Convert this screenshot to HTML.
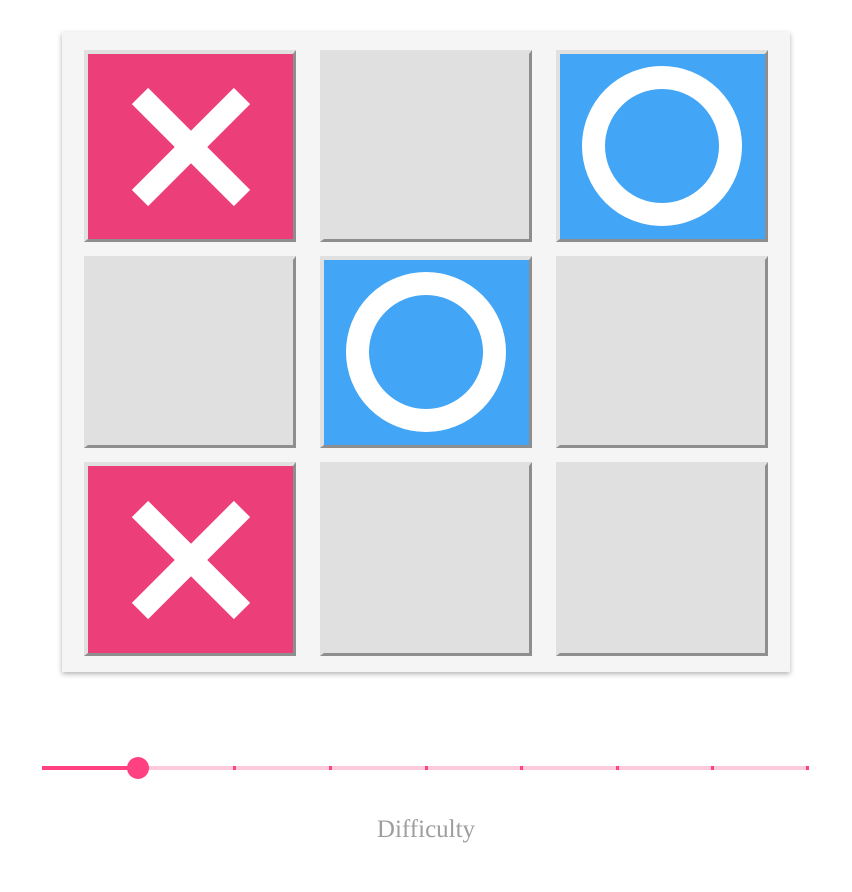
<!DOCTYPE html>
<html><head><style>
body{margin:0;width:852px;height:892px;background:#fff;position:relative;font-family:"Liberation Serif",serif;overflow:hidden}
.board{position:absolute;left:62px;top:32px;width:728px;height:640px;background:#f5f5f5;box-shadow:0 2px 5px rgba(0,0,0,.3)}
.c{position:absolute;box-sizing:border-box;width:212px;border-style:solid;border-width:4px 3px 3px 4px;border-color:#e0e0e0 #8e8e8e #8e8e8e #e0e0e0;background:#e0e0e0}
.x{background:#ec3e78}.o{background:#42a5f5}
.c svg{position:absolute;left:50%;top:50%;transform:translate(-50%,-50%)}
</style></head><body>
<div class="board"></div>
<div class="c x" style="left:84px;top:50px;height:192px"><svg width="160" height="160" viewBox="-80 -80 160 160"><path d="M-51-51L51 51M51-51L-51 51" stroke="#fff" stroke-width="23"/></svg></div>
<div class="c" style="left:320px;top:50px;height:192px"></div>
<div class="c o" style="left:556px;top:50px;height:192px"><svg width="170" height="170" viewBox="-85 -85 170 170" style="margin-left:-1px;margin-top:-1px"><circle r="68.5" fill="none" stroke="#fff" stroke-width="23"/></svg></div>
<div class="c" style="left:84px;top:256px;height:192px"></div>
<div class="c o" style="left:320px;top:256px;height:192px"><svg width="170" height="170" viewBox="-85 -85 170 170" style="margin-left:-1px;margin-top:-1px"><circle r="68.5" fill="none" stroke="#fff" stroke-width="23"/></svg></div>
<div class="c" style="left:556px;top:256px;height:192px"></div>
<div class="c x" style="left:84px;top:462px;height:194px"><svg width="160" height="160" viewBox="-80 -80 160 160"><path d="M-51-51L51 51M51-51L-51 51" stroke="#fff" stroke-width="23"/></svg></div>
<div class="c" style="left:320px;top:462px;height:194px"></div>
<div class="c" style="left:556px;top:462px;height:194px"></div>
<svg style="position:absolute;left:0;top:0" width="852" height="892">
<rect x="42" y="766" width="766" height="4" fill="#fdc9dc"/>
<rect x="42" y="766" width="96" height="4" fill="#ff4081"/>
<g fill="#ff4081"><rect x="233" y="766" width="3" height="4"/><rect x="329" y="766" width="3" height="4"/><rect x="425" y="766" width="3" height="4"/><rect x="520" y="766" width="3" height="4"/><rect x="616" y="766" width="3" height="4"/><rect x="711" y="766" width="3" height="4"/><rect x="806" y="766" width="3" height="4"/></g>
<circle cx="138" cy="768" r="11" fill="#ff4081"/>
</svg>
<div style="position:absolute;left:0;width:852px;top:815px;text-align:center;color:#9e9e9e;font-size:25px;line-height:30px">Difficulty</div>
</body></html>
